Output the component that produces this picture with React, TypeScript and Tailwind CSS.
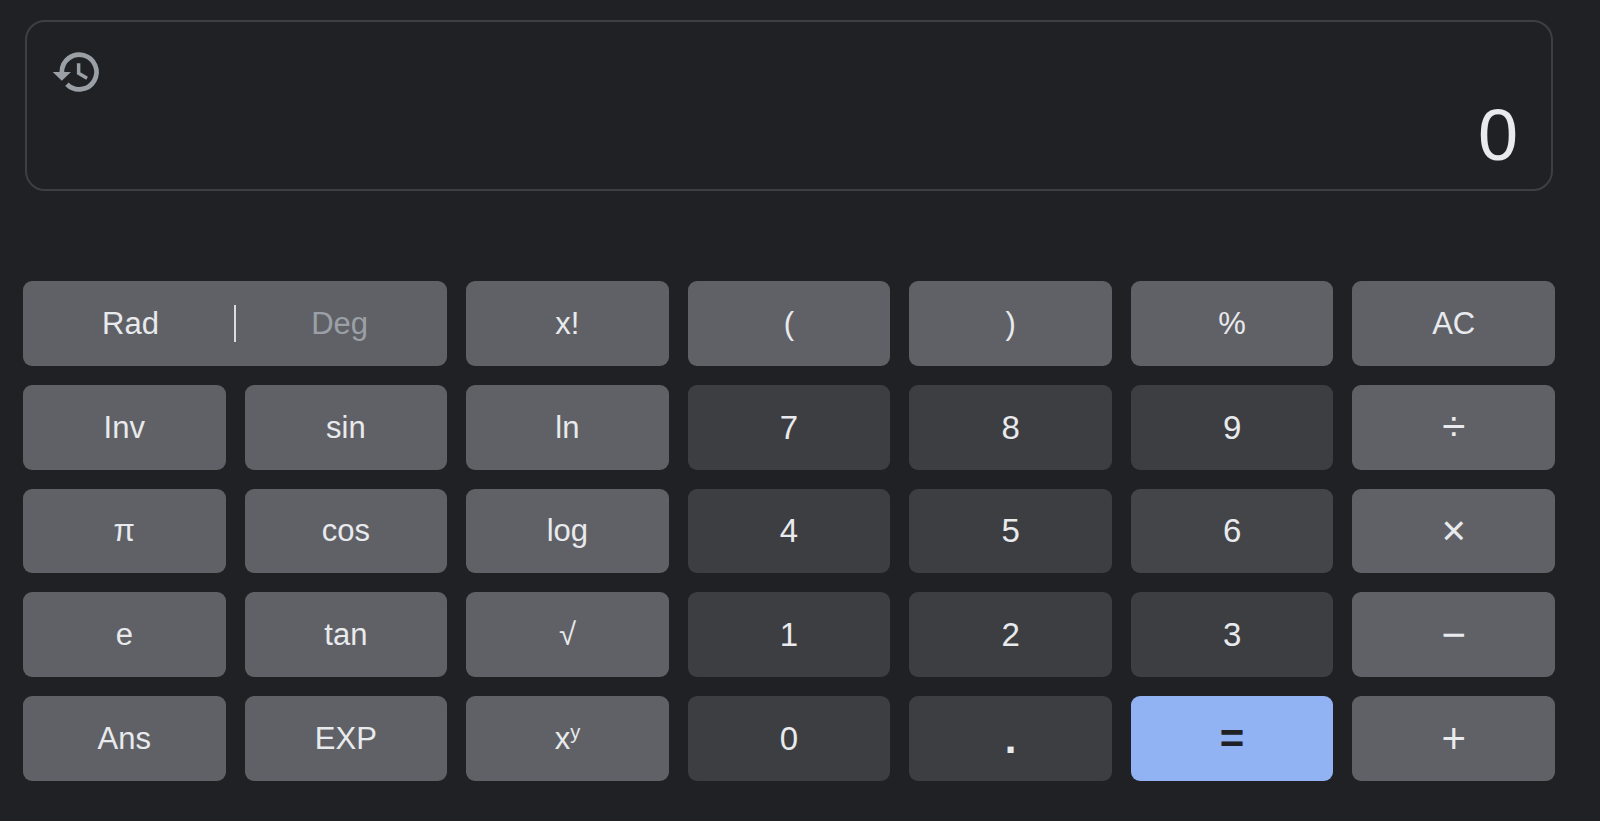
import { useState } from 'react'
import clsx from 'clsx'

type Tone = 'function' | 'digit' | 'active' | 'equals'
type Size = 'label' | 'number' | 'symbol' | 'heavy'

type Key = {
  id: string
  label: React.ReactNode
  tone?: Tone
  size?: Size
}

const tones: Record<Tone, string> = {
  function: 'bg-[#606166] text-[#e8eaed]',
  digit: 'bg-[#3d3e41] text-[#e8eaed]',
  active: 'bg-[#444548] text-[#e8eaed]',
  equals: 'bg-[#91b3f4] text-[#202124]',
}

const sizes: Record<Size, string> = {
  label: 'text-[31px]',
  number: 'text-[33px]',
  symbol: 'text-[42px]',
  heavy: 'text-[42px] font-bold',
}

const keys: Key[] = [
  { id: 'factorial', label: 'x!' },
  { id: 'open', label: '(' },
  { id: 'close', label: ')' },
  { id: 'percent', label: '%' },
  { id: 'clear', label: 'AC' },

  { id: 'inverse', label: 'Inv' },
  { id: 'sin', label: 'sin' },
  { id: 'ln', label: 'ln' },
  { id: '7', label: '7', tone: 'digit', size: 'number' },
  { id: '8', label: '8', tone: 'digit', size: 'number' },
  { id: '9', label: '9', tone: 'digit', size: 'number' },
  { id: 'divide', label: '÷', size: 'symbol' },

  { id: 'pi', label: 'π' },
  { id: 'cos', label: 'cos' },
  { id: 'log', label: 'log' },
  { id: '4', label: '4', tone: 'digit', size: 'number' },
  { id: '5', label: '5', tone: 'digit', size: 'number' },
  { id: '6', label: '6', tone: 'active', size: 'number' },
  { id: 'multiply', label: '×', size: 'symbol' },

  { id: 'e', label: 'e' },
  { id: 'tan', label: 'tan' },
  { id: 'sqrt', label: '√' },
  { id: '1', label: '1', tone: 'digit', size: 'number' },
  { id: '2', label: '2', tone: 'digit', size: 'number' },
  { id: '3', label: '3', tone: 'digit', size: 'number' },
  { id: 'minus', label: '−', size: 'symbol' },

  { id: 'answer', label: 'Ans' },
  { id: 'exp', label: 'EXP' },
  {
    id: 'power',
    label: (
      <span>
        x<sup className="text-[20px]">y</sup>
      </span>
    ),
  },
  { id: '0', label: '0', tone: 'digit', size: 'number' },
  { id: 'point', label: '.', tone: 'digit', size: 'heavy' },
  { id: 'equals', label: '=', tone: 'equals', size: 'heavy' },
  { id: 'plus', label: '+', size: 'symbol' },
]

function HistoryIcon() {
  return (
    <svg viewBox="0 0 24 24" fill="none" stroke="currentColor" className="size-[52px]">
      <path d="M5 12a8 8 0 1 1 2.34 5.66" strokeWidth="2.2" />
      <path d="M.8 12h8.4L5 16z" fill="currentColor" stroke="none" />
      <path d="M12.75 8v4.6l3.9 2.3" strokeWidth="1.6" />
    </svg>
  )
}

function CalcKey({ label, tone = 'function', size = 'label' }: Omit<Key, 'id'>) {
  return (
    <button
      type="button"
      className={clsx(
        'flex items-center justify-center rounded-[9px] leading-none',
        tones[tone],
        sizes[size],
      )}
    >
      {label}
    </button>
  )
}

function AngleSwitch() {
  const [unit, setUnit] = useState('Rad')

  return (
    <div className="col-span-2 flex items-center rounded-[9px] bg-[#606166] text-[31px] leading-none">
      {['Rad', 'Deg'].map((name, i) => (
        <button
          key={name}
          type="button"
          aria-pressed={unit === name}
          onClick={() => setUnit(name)}
          className={clsx(
            'h-[37px] flex-1',
            i === 0 ? 'border-r-2 border-[#dadce0] pl-1' : 'pr-1',
            unit === name ? 'text-[#e8eaed]' : 'text-[#9aa0a6]',
          )}
        >
          {name}
        </button>
      ))}
    </div>
  )
}

export default function App() {
  return (
    <main className="flex min-h-screen flex-col bg-[#202124] pt-5 pr-[45px] pb-10 pl-[23px] font-['Liberation_Sans',Arial,sans-serif]">
      <section className="mx-0.5 flex items-start justify-between rounded-[20px] border-2 border-[#3c4043] pt-6 pr-[33px] pb-[18px] pl-6">
        <button type="button" aria-label="History" className="text-[#9aa0a6]">
          <HistoryIcon />
        </button>
        <output className="pt-[53px] text-[72px] leading-none text-[#e8eaed]">0</output>
      </section>

      <div className="mt-[90px] grid flex-1 auto-rows-fr grid-cols-7 gap-[19px]">
        <AngleSwitch />
        {keys.map(({ id, ...key }) => (
          <CalcKey key={id} {...key} />
        ))}
      </div>
    </main>
  )
}
